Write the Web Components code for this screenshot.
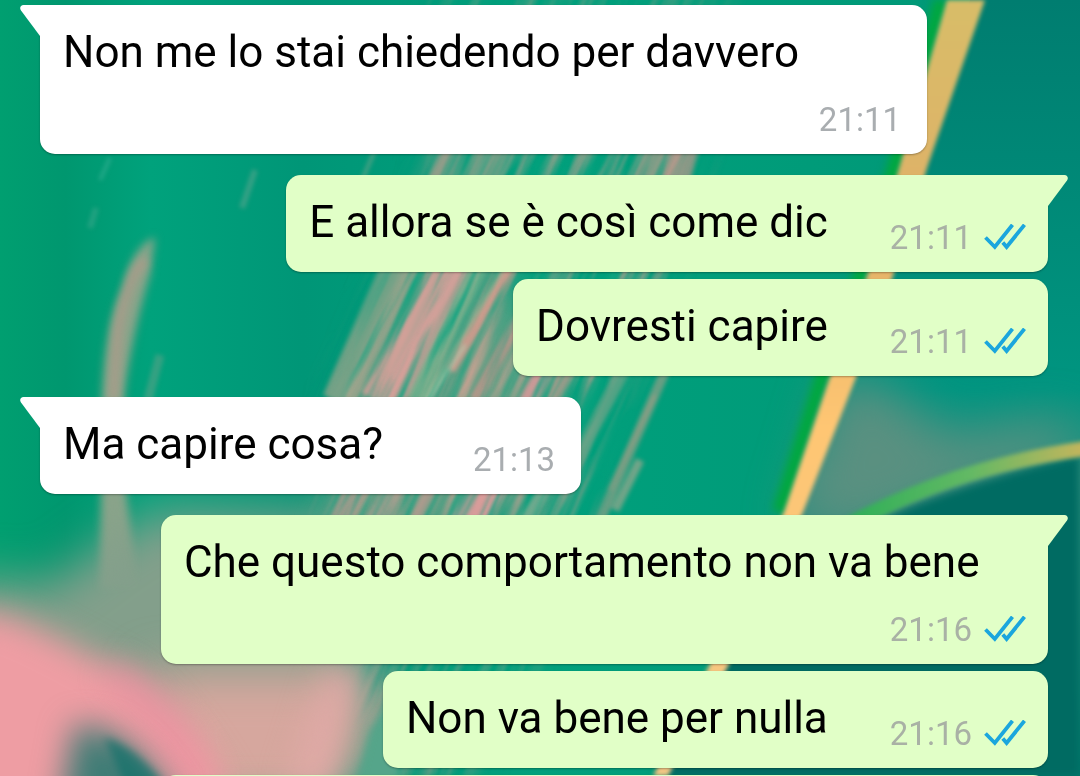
<!DOCTYPE html>
<html lang="it">
<head>
<meta charset="utf-8">
<meta name="viewport" content="width=device-width, initial-scale=1">
<title>Chat</title>
<style>
  body {
    margin: 0;
    overflow: hidden;
    background: #009a7c;
    font-family: Roboto, "Noto Sans", sans-serif;
  }
</style>
</head>
<body>
<chat-thread>
  <chat-message side="in" tail time="21:11">Non me lo stai chiedendo per davvero</chat-message>
  <chat-message side="out" tail time="21:11">E allora se è così come dic</chat-message>
  <chat-message side="out" time="21:11">Dovresti capire</chat-message>
  <chat-message side="in" tail time="21:13">Ma capire cosa?</chat-message>
  <chat-message side="out" tail time="21:16">Che questo comportamento non va bene</chat-message>
  <chat-message side="out" time="21:16">Non va bene per nulla</chat-message>
  <chat-message side="out" pending></chat-message>
</chat-thread>

<script>
/**
 * @class ChatWallpaper
 * Leaf photo style wallpaper, fills its positioned parent
 */
class ChatWallpaper extends HTMLElement {
  constructor() {
    super();
    this.attachShadow({ mode: "open" });
  }

  connectedCallback() {
    // x1, y1, x2, y2, width, colour, opacity
    const streaks = [
      [490, 230, 385, 410, 26, "#c99f96", 0.8],
      [450, 265, 375, 400, 30, "#d8a09a", 0.8],
      [395, 265, 335, 400, 26, "#8da48a", 0.8],
      [415, 265, 350, 400, 14, "#aea68f", 0.7],
      [480, 265, 415, 400, 16, "#77b38e", 0.8],
      [505, 270, 425, 400, 6, "#9ab795", 0.8],
      [512, 268, 450, 370, 11, "#d39b8d", 0.9],
      [465, 345, 425, 405, 3, "#a9d0b0", 0.8],
      [530, 300, 475, 400, 12, "#c3958b", 0.8],
      [555, 350, 525, 410, 20, "#d39a99", 0.9],
      [580, 350, 540, 410, 18, "#b99c8e", 0.8],
      [625, 370, 575, 460, 14, "#5fa487", 0.7],
      [670, 360, 600, 520, 10, "#829f86", 0.8],
      [655, 395, 610, 490, 5, "#9c9d85", 0.6],
      [640, 460, 615, 510, 9, "#8ea78d", 0.8],
      [495, 480, 460, 530, 32, "#e59c9d", 0.9],
      [400, 480, 370, 530, 20, "#b29f92", 0.8],
      [360, 480, 335, 530, 20, "#c79a92", 0.7],
      [435, 480, 410, 530, 10, "#c79a92", 0.7],
      [550, 480, 520, 530, 12, "#9fae96", 0.7],
      [660, 130, 635, 200, 26, "#b79d8d", 0.6],
      [690, 130, 670, 200, 28, "#c0988c", 0.7],
      [500, 130, 475, 200, 34, "#a6a08c", 0.7],
      [460, 130, 435, 200, 28, "#a99d8d", 0.6],
      [110, 158, 100, 180, 4, "#38b195", 0.6],
      [96, 208, 90, 228, 6, "#38a78a", 0.6],
      [255, 170, 242, 208, 6, "#4ca48b", 0.7],
      [160, 355, 148, 400, 9, "#4aa285", 0.7],
      [375, 150, 360, 185, 4, "#8ca88f", 0.5]
    ];
    const lines = streaks.map(([x1, y1, x2, y2, w, color, opacity]) =>
      `<line x1="${x1}" y1="${y1}" x2="${x2}" y2="${y2}" stroke="${color}" stroke-width="${w}" opacity="${opacity}"/>`
    ).join("");

    this.shadowRoot.innerHTML = `
      <style>
        :host {
          position: absolute;
          inset: 0;
          z-index: -1;
          overflow: hidden;
        }

        svg {
          display: block;
          width: 100%;
          height: 100%;
        }
      </style>
      <svg viewBox="0 0 1080 776" preserveAspectRatio="xMidYMid slice" aria-hidden="true">
        <defs>
          <linearGradient id="leaf">
            <stop offset="0" stop-color="#009f70"/>
            <stop offset="0.06" stop-color="#00976f"/>
            <stop offset="0.14" stop-color="#00a27c"/>
            <stop offset="0.28" stop-color="#009677"/>
            <stop offset="0.5" stop-color="#00a07c"/>
            <stop offset="1" stop-color="#009676"/>
          </linearGradient>
          <linearGradient id="shade" x2="0" y2="1">
            <stop offset="0" stop-color="#007d70"/>
            <stop offset="0.3" stop-color="#008c79"/>
            <stop offset="0.5" stop-color="#009580"/>
            <stop offset="0.62" stop-color="#2f9180"/>
            <stop offset="1" stop-color="#00796c"/>
          </linearGradient>
          <linearGradient id="stem" x2="0" y2="1">
            <stop offset="0" stop-color="#d8bd68"/>
            <stop offset="0.3" stop-color="#e0b068"/>
            <stop offset="0.55" stop-color="#ffc673"/>
            <stop offset="1" stop-color="#f3c785"/>
          </linearGradient>
          <linearGradient id="rib">
            <stop offset="0" stop-color="#2faf58"/>
            <stop offset="0.5" stop-color="#63b964"/>
            <stop offset="1" stop-color="#c9b55c"/>
          </linearGradient>
          <linearGradient id="fade" x2="0" y2="1">
            <stop offset="0" stop-color="#fff" stop-opacity="0.5"/>
            <stop offset="0.4" stop-color="#fff"/>
            <stop offset="1" stop-color="#fff" stop-opacity="0.7"/>
          </linearGradient>
          <filter id="soft2" x="-20%" y="-20%" width="140%" height="140%" color-interpolation-filters="sRGB"><feGaussianBlur stdDeviation="2"/></filter>
          <filter id="soft4" x="-40%" y="-20%" width="180%" height="140%" color-interpolation-filters="sRGB"><feGaussianBlur stdDeviation="4"/></filter>
          <filter id="soft16" x="-50%" y="-50%" width="200%" height="200%" color-interpolation-filters="sRGB"><feGaussianBlur stdDeviation="16"/></filter>
          <filter id="soft24" x="-80%" y="-80%" width="260%" height="260%" color-interpolation-filters="sRGB"><feGaussianBlur stdDeviation="24"/></filter>
          <filter id="grain" x="0" y="0" width="100%" height="100%" color-interpolation-filters="sRGB">
            <feTurbulence type="fractalNoise" baseFrequency="0.08 0.006" numOctaves="4" seed="4"/>
            <feColorMatrix values="0 0 0 0 0.78  0 0 0 0 0.63  0 0 0 0 0.57  2.6 0 0 0 -1.1"/>
            <feGaussianBlur stdDeviation="1"/>
          </filter>
          <filter id="glaze" x="0" y="0" width="100%" height="100%" color-interpolation-filters="sRGB">
            <feTurbulence type="fractalNoise" baseFrequency="0.12 0.007" numOctaves="4" seed="11"/>
            <feColorMatrix values="0 0 0 0 0.06  0 0 0 0 0.64  0 0 0 0 0.5  0 2.6 0 0 -1.2"/>
            <feGaussianBlur stdDeviation="1"/>
          </filter>
          <mask id="brush">
            <path d="M430 -20H720L700 160 620 400 560 600 470 776H370L320 520 345 370 430 180Z" fill="url(#fade)" filter="url(#soft16)"/>
          </mask>
        </defs>

        <rect width="1080" height="776" fill="url(#leaf)"/>
        <path d="M970 0 914 165 842 380 794 512 718 668 661 776H1080V0Z" fill="url(#shade)"/>

        <!-- haze and dark leaf on the right -->
        <path d="M840 370 890 390 950 440 1060 420 1080 450 860 530H790Z" fill="#5a9080" filter="url(#soft24)"/>
        <path d="M840 540Q930 490 1080 455V776H655L740 630Z" fill="#006b62" filter="url(#soft4)"/>
        <path d="M850 524Q960 465 1090 448" fill="none" stroke="url(#rib)" stroke-width="15" filter="url(#soft2)"/>

        <!-- brushed texture -->
        <path d="M430 230 350 400 310 540H480L560 400 500 250Z" fill="#9fa38c" opacity="0.5" filter="url(#soft16)"/>
        <g mask="url(#brush)">
          <rect x="100" y="-500" width="1100" height="1500" transform="rotate(25 500 350)" filter="url(#grain)"/>
        </g>
        <g filter="url(#soft2)">${lines}</g>
        <g mask="url(#brush)">
          <rect x="100" y="-500" width="1100" height="1500" transform="rotate(25 500 350)" filter="url(#glaze)"/>
        </g>
        <path d="M155 237C140 243 128 262 123 288C110 315 104 350 102 400L100 590H140C122 480 120 430 125 390C130 350 142 300 150 275Z" fill="#8aa48a" filter="url(#soft4)"/>
        <path d="M146 260C135 268 125 290 118 330L113 400" fill="none" stroke="#a89c8a" stroke-width="9" filter="url(#soft4)"/>

        <!-- stem -->
        <path d="M941 0 895 165 860 276 821 380 779 512" fill="none" stroke="#00a83e" stroke-width="14" filter="url(#soft4)"/>
        <path d="M947 0 900 165 867 276 829 380 784 512 708 668 653 776H668L727 668 803 512 855 380 893 276 928 165 985 0Z" fill="url(#stem)" filter="url(#soft2)"/>

        <!-- pink petal -->
        <path d="M-40 575 50 585 110 540 160 510 330 515 340 600 390 776H-40Z" fill="#839f8b" filter="url(#soft24)"/>
        <path d="M150 670 370 670 340 810H170Z" fill="#d6a79e" filter="url(#soft24)"/>
        <path d="M-40 605C20 612 60 640 120 670C170 700 200 740 250 830H-40Z" fill="#ee9da3" filter="url(#soft16)"/>
        <path d="M110 670C150 700 180 730 205 790" fill="none" stroke="#f08fa2" stroke-width="26" opacity="0.8" filter="url(#soft16)"/>
        <path d="M358 668 325 790H290L330 668Z" fill="#e3aaa8" filter="url(#soft16)"/>
        <path d="M400 690 370 730 355 790H400Z" fill="#55a58a" filter="url(#soft4)"/>
        <path d="M75 725C115 725 150 755 180 810H60Z" fill="#3d7c75" filter="url(#soft16)"/>
        <path d="M104 738C125 742 145 760 165 785H125Z" fill="#0d7069" opacity="0.7" filter="url(#soft4)"/>
      </svg>
    `;
  }
}

/**
 * @class ReadTicks
 * Blue double tick shown when a message has been read
 */
class ReadTicks extends HTMLElement {
  constructor() {
    super();
    this.attachShadow({ mode: "open" }).innerHTML = `
      <style>
        :host {
          display: block;
          width: 42px;
          height: 28px;
        }

        svg {
          display: block;
        }
      </style>
      <svg width="42" height="28" viewBox="0 0 42 28" fill="none" stroke="#1ba6dd" stroke-width="3.8" role="img" aria-label="Letto">
        <path d="M1.5 13.5 10.8 23 28.5 0.8"/>
        <path d="M18.8 18.5 22.6 23 40.5 0.8"/>
      </svg>
    `;
  }
}

/**
 * @class ChatMessage
 * Usage: <chat-message side="in|out" tail time="21:11">text</chat-message>
 */
class ChatMessage extends HTMLElement {
  constructor() {
    super();
    this.attachShadow({ mode: "open" });
  }

  connectedCallback() {
    const time = this.getAttribute("time");
    const ticks = this.getAttribute("side") === "out" ? "<read-ticks></read-ticks>" : "";
    const tail = this.hasAttribute("tail")
      ? `<svg class="tail" width="21" height="32" viewBox="0 0 21 32" aria-hidden="true"><path d="M21 0H3.5C0.5 0 -0.8 3 1 5.5L20 31H21Z"/></svg>`
      : "";
    const meta = time ? `<div class="meta"><time>${time}</time>${ticks}</div>` : "";

    this.shadowRoot.innerHTML = `
      <style>
        :host {
          --bubble: #e1ffc7;
          position: relative;
          display: block;
          box-sizing: border-box;
          align-self: flex-end;
          max-width: 88%;
          min-height: 97px;
          padding: 21px 22px 14px 23px;
          border-radius: 15px;
          background: var(--bubble);
          box-shadow: 0 1px 2px rgba(0, 0, 0, 0.3);
        }

        :host([side="in"]) {
          --bubble: #fff;
          align-self: flex-start;
          padding-right: 26px;
        }

        :host([side="in"][tail]) {
          border-top-left-radius: 0;
        }

        :host([side="out"][tail]) {
          border-top-right-radius: 0;
        }

        :host([pending]) {
          width: 88%;
        }

        .tail {
          position: absolute;
          top: 0;
          left: -20px;
          fill: var(--bubble);
        }

        :host([side="out"]) .tail {
          left: auto;
          right: -20px;
          transform: scaleX(-1);
        }

        .body {
          display: flex;
          flex-wrap: wrap;
          align-items: flex-end;
          justify-content: space-between;
          row-gap: 12px;
        }

        p {
          margin: 0 0 10px;
          color: #000;
          font-size: 44px;
          line-height: 52px;
        }

        .meta {
          display: flex;
          align-items: center;
          gap: 12px;
          margin-left: auto;
          padding-left: 62px;
          color: #a9b1a5;
          font-size: 33px;
          line-height: 40px;
        }

        :host([side="in"]) .meta {
          padding-left: 90px;
          color: #a9adb0;
        }
      </style>
      ${tail}
      <div class="body"><p><slot></slot></p>${meta}</div>
    `;
  }
}

/**
 * @class ChatThread
 * Column of messages over the wallpaper
 */
class ChatThread extends HTMLElement {
  constructor() {
    super();
    this.attachShadow({ mode: "open" }).innerHTML = `
      <style>
        :host {
          position: relative;
          z-index: 0;
          display: block;
          height: 100vh;
          overflow: hidden;
        }

        main {
          display: flex;
          flex-direction: column;
          gap: 7px;
          padding: 5px 32px 0 40px;
        }

        /* a tail marks a new speaker, so it gets more air above */
        ::slotted([tail]:not(:first-child)) {
          margin-top: 14px;
        }
      </style>
      <chat-wallpaper></chat-wallpaper>
      <main><slot></slot></main>
    `;
  }
}

customElements.define("chat-wallpaper", ChatWallpaper);
customElements.define("read-ticks", ReadTicks);
customElements.define("chat-message", ChatMessage);
customElements.define("chat-thread", ChatThread);
</script>
</body>
</html>
